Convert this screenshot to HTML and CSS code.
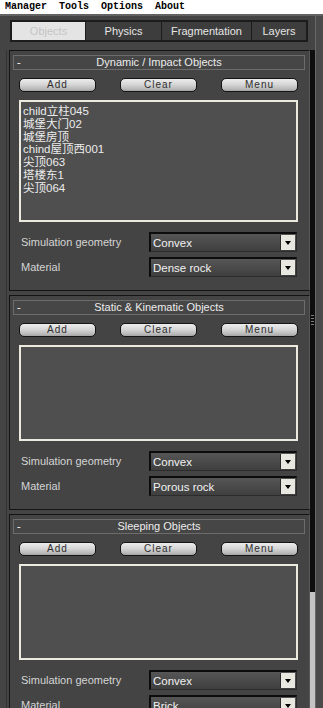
FILE: index.html
```html
<!DOCTYPE html>
<html>
<head>
<meta charset="utf-8">
<link rel="stylesheet" href="styles.css">
</head>
<body>
<div class="menubar">Manager  Tools  Options  About</div>
<div class="window">
  <div class="main">
    <div class="tabs">
      <div class="tab active">Objects</div>
      <div class="tab">Physics</div>
      <div class="tab">Fragmentation</div>
      <div class="tab">Layers</div>
    </div>
    <div class="rollouts">
      <section class="rollout">
        <div class="rhead"><span class="minus">-</span><span class="rtitle">Dynamic / Impact Objects</span><span></span></div>
        <div class="rbody">
          <div class="buttons"><div class="btn">Add</div><div class="btn">Clear</div><div class="btn">Menu</div></div>
          <div class="list tall">
            <div class="item">child立柱045</div>
            <div class="item">城堡大门02</div>
            <div class="item">城堡房顶</div>
            <div class="item">chind屋顶西001</div>
            <div class="item">尖顶063</div>
            <div class="item">塔楼东1</div>
            <div class="item">尖顶064</div>
          </div>
          <div class="fields">
            <div class="field"><span class="label">Simulation geometry</span><div class="dropdown"><span class="value">Convex</span><span class="arrow"></span></div></div>
            <div class="field"><span class="label">Material</span><div class="dropdown"><span class="value">Dense rock</span><span class="arrow"></span></div></div>
          </div>
        </div>
      </section>
      <section class="rollout">
        <div class="rhead"><span class="minus">-</span><span class="rtitle">Static &amp; Kinematic Objects</span><span></span></div>
        <div class="rbody">
          <div class="buttons"><div class="btn">Add</div><div class="btn">Clear</div><div class="btn">Menu</div></div>
          <div class="list"></div>
          <div class="fields">
            <div class="field"><span class="label">Simulation geometry</span><div class="dropdown"><span class="value">Convex</span><span class="arrow"></span></div></div>
            <div class="field"><span class="label">Material</span><div class="dropdown"><span class="value">Porous rock</span><span class="arrow"></span></div></div>
          </div>
        </div>
      </section>
      <section class="rollout">
        <div class="rhead"><span class="minus">-</span><span class="rtitle">Sleeping Objects</span><span></span></div>
        <div class="rbody">
          <div class="buttons"><div class="btn">Add</div><div class="btn">Clear</div><div class="btn">Menu</div></div>
          <div class="list"></div>
          <div class="fields">
            <div class="field"><span class="label">Simulation geometry</span><div class="dropdown"><span class="value">Convex</span><span class="arrow"></span></div></div>
            <div class="field"><span class="label">Material</span><div class="dropdown"><span class="value">Brick</span><span class="arrow"></span></div></div>
          </div>
        </div>
      </section>
    </div>
  </div>
  <div class="scrollbar">
    <div class="thumb"><div class="grip"></div></div>
    <div class="track"></div>
  </div>
  <div class="edge"></div>
</div>
</body>
</html>
```
FILE: styles.css
```css
html, body {
  margin: 0;
  padding: 0;
  width: 323px;
  height: 708px;
  overflow: hidden;
  background: #444444;
  font-family: "Liberation Sans", Arial, "Noto Sans CJK SC", sans-serif;
}

.menubar {
  height: 14px;
  background: #ffffff;
  color: #000000;
  font-family: "Liberation Mono", "DejaVu Sans Mono", monospace;
  font-size: 10px;
  font-weight: bold;
  line-height: 14px;
  padding-left: 5px;
  white-space: pre;
}

.window {
  display: flex;
  height: 694px;
  box-sizing: border-box;
  border-top: 2px solid #626262;
  overflow: hidden;
}

.main {
  width: 310px;
  flex: none;
  display: flex;
  flex-direction: column;
}

.tabs {
  margin: 4px 0 0 10px;
  width: 298px;
  box-sizing: border-box;
  border: 1px solid #1c1c1c;
  padding: 1px;
  background: #1c1c1c;
  display: grid;
  grid-template-columns: 73px 75px 89px 1fr;
  gap: 1px;
}

.tab {
  height: 18px;
  line-height: 18px;
  text-align: center;
  font-size: 11px;
  color: #e6e6e6;
  background: #3d3d3d;
}

.tab.active {
  background: #e4e4e4;
  color: #c4c4c4;
}

.rollouts {
  margin: 8px 0 0 6px;
  border-left: 1px solid #333333;
  padding-left: 2px;
  display: flex;
  flex-direction: column;
  gap: 4px;
}

.rollout {
  border: 1px solid #141414;
  border-right-color: #585858;
  padding: 4px 0 13px;
  background: #444444;
}

.rhead {
  margin: 0 4px 0 3px;
  height: 15px;
  box-sizing: border-box;
  border: 1px solid #6c6c6c;
  background: #464646;
  display: grid;
  grid-template-columns: 1fr auto 1fr;
  align-items: center;
  font-size: 11px;
  line-height: 13px;
  color: #ececec;
}

.minus {
  padding-left: 3px;
  color: #ffffff;
}

.rbody {
  padding: 0 11px 0 9px;
  margin-top: 8px;
}

.buttons {
  display: flex;
  justify-content: space-between;
}

.btn {
  width: 77px;
  height: 14px;
  box-sizing: border-box;
  border: 1px solid #151515;
  border-radius: 5px;
  background: linear-gradient(#ececec 0%, #d6d6d6 45%, #bcbcbc 80%, #a4a4a4 100%);
  color: #2e2e2e;
  font-family: "Liberation Sans", Arial, sans-serif;
  font-size: 10px;
  letter-spacing: 1px;
  line-height: 12px;
  text-align: center;
}

.list {
  margin-top: 8px;
  height: 96px;
  box-sizing: border-box;
  border: 2px solid #eceadf;
  background: #4f4f4f;
  padding: 3px 2px;
}

.list.tall {
  height: 122px;
}

.item {
  font-size: 11.5px;
  line-height: 12.8px;
  color: #ececec;
  white-space: nowrap;
}

.fields {
  margin-top: 10px;
  display: flex;
  flex-direction: column;
  gap: 5px;
}

.field {
  display: grid;
  grid-template-columns: 1fr 148px;
  align-items: center;
  padding-left: 2px;
  margin-right: 1px;
}

.label {
  font-size: 11px;
  color: #d4d4d4;
}

.dropdown {
  height: 20px;
  box-sizing: border-box;
  border-top: 2px solid #0c0c0c;
  border-left: 2px solid #0c0c0c;
  border-right: 1px solid #2c2c2c;
  border-bottom: 1px solid #2c2c2c;
  background: linear-gradient(#565656, #3f3f3f);
  display: flex;
  align-items: center;
  justify-content: space-between;
}

.value {
  padding-left: 2px;
  font-size: 11.5px;
  color: #f2f2f2;
}

.arrow {
  width: 15px;
  height: 15px;
  margin-right: 1px;
  box-sizing: border-box;
  background: #e8e8e0;
  border-left: 1px solid #2a2a2a;
  display: flex;
  align-items: center;
  justify-content: center;
}

.arrow::after {
  content: "";
  width: 0;
  height: 0;
  border-left: 3.5px solid transparent;
  border-right: 3.5px solid transparent;
  border-top: 4px solid #000000;
}

.scrollbar {
  width: 5px;
  flex: none;
  margin-top: 34px;
  display: flex;
  flex-direction: column;
}

.thumb {
  height: 542px;
  background: #0e0e0e;
  display: flex;
  align-items: center;
  justify-content: center;
}

.grip {
  width: 3px;
  height: 12px;
  background: repeating-linear-gradient(#7a7a7a 0 1px, transparent 1px 3px);
}

.track {
  flex: 1;
  background: #c4c4c4;
}

.edge {
  width: 8px;
  flex: none;
  box-sizing: border-box;
  border-left: 1px solid #686868;
  background: #4a4a4a;
}
```
